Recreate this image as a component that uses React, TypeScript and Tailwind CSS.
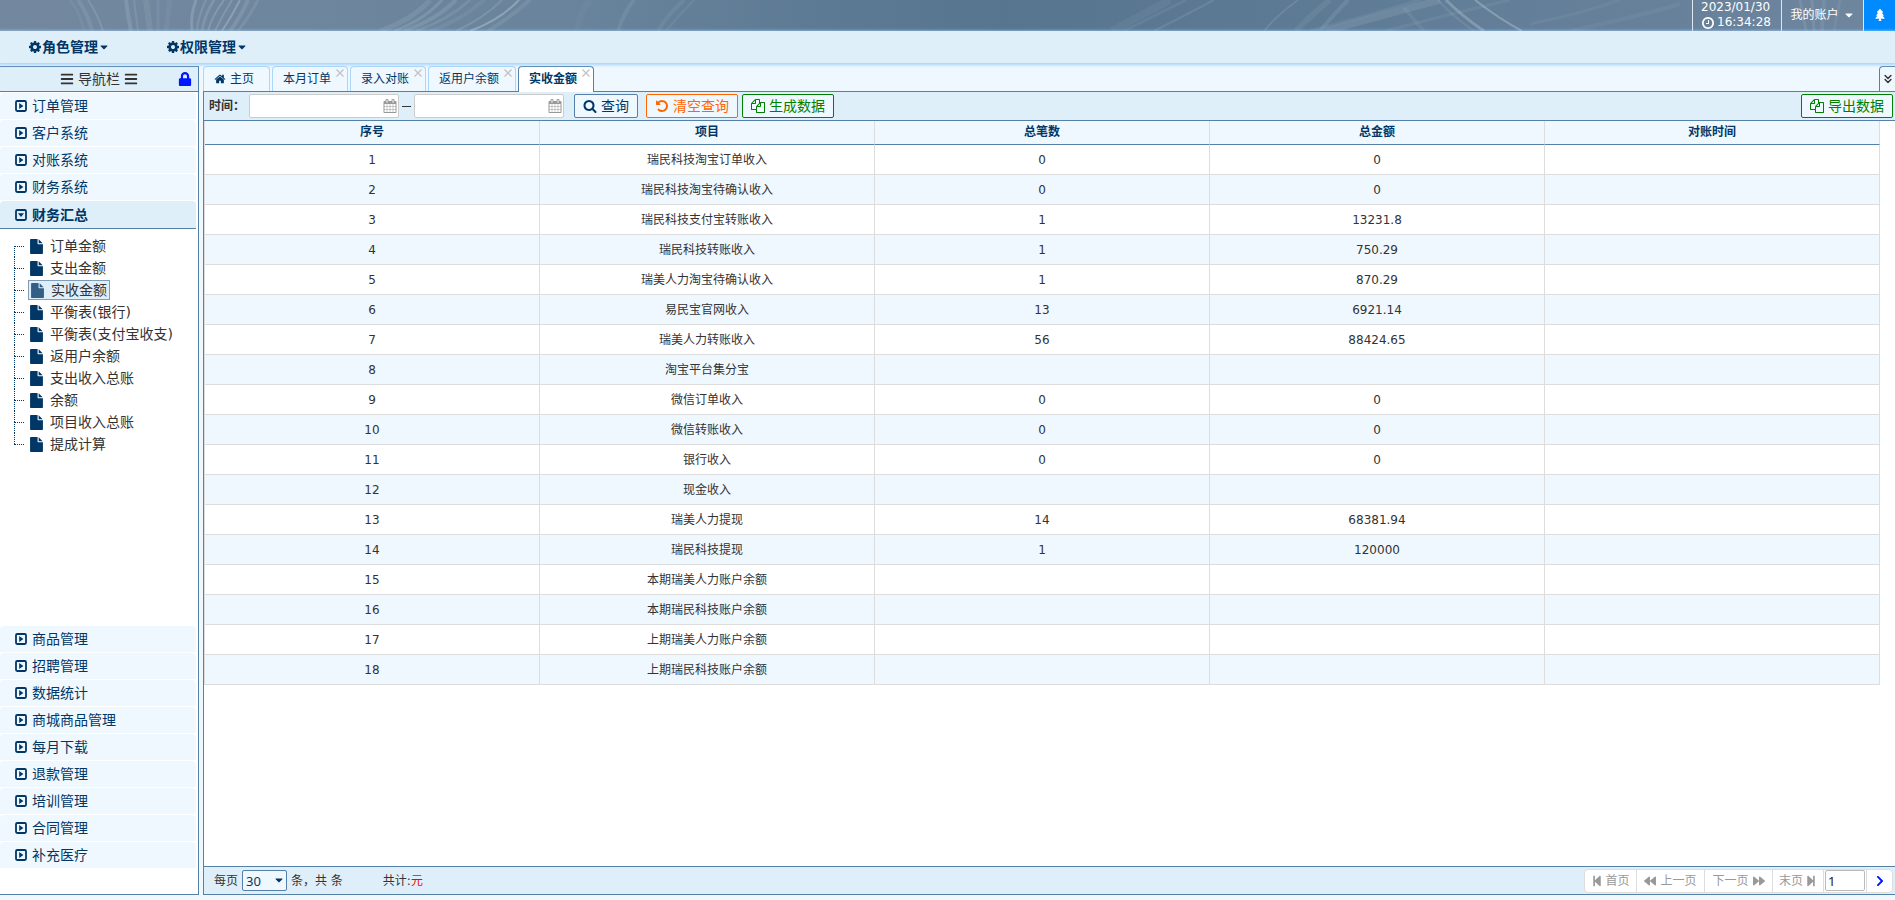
import React from "react";
import { ChevronsDown } from "lucide-react";
import {
  FaBackward,
  FaBars,
  FaCaretDown,
  FaChevronRight,
  FaForward,
  FaLock,
  FaStepBackward,
  FaStepForward,
  FaTree,
} from "react-icons/fa";

const PATHS = {
  copy: "M1696 384q40 0 68 28t28 68v1216q0 40-28 68t-68 28h-960q-40 0-68-28t-28-68v-288h-544q-40 0-68-28t-28-68v-672q0-40 20-88t48-76l408-408q28-28 76-48t88-20h416q40 0 68 28t28 68v328q68-40 128-40h416zm-544 213l-299 299h299v-299zm-640-384l-299 299h299v-299zm196 647l316-316v-416h-384v416q0 40-28 68t-68 28h-416v640h512v-256q0-40 20-88t48-76zm956 804v-1152h-384v416q0 40-28 68t-68 28h-416v640h896z",
  file: "M1152 512v-472q22 14 36 28l408 408q14 14 28 36h-472zm-128 32q0 40 28 68t68 28h544v1056q0 40-28 68t-68 28h-1344q-40 0-68-28t-28-68v-1600q0-40 28-68t68-28h800v544z",
  clock:
    "M1024 544v448q0 14-9 23t-23 9h-320q-14 0-23-9t-9-23v-64q0-14 9-23t23-9h224v-352q0-14 9-23t23-9h64q14 0 23 9t9 23zm416 352q0-148-73-273t-198-198-273-73-273 73-198 198-73 273 73 273 198 198 273 73 273-73 198-198 73-273zm224 0q0 209-103 385.500t-279.500 279.500-385.500 103-385.500-103-279.500-279.500-103-385.500 103-385.500 279.500-279.500 385.500-103 385.500 103 279.500 279.500 103 385.500z",
  calendar:
    "M192 1664h288v-288h-288v288zm352 0h320v-288h-320v288zm-352-352h288v-320h-288v320zm352 0h320v-320h-320v320zm-352-384h288v-288h-288v288zm736 736h320v-288h-320v288zm-384-736h320v-288h-320v288zm768 736h288v-288h-288v288zm-384-352h320v-320h-320v320zm-352-864v-288q0-13-9.500-22.500t-22.500-9.500h-64q-13 0-22.500 9.500t-9.500 22.500v288q0 13 9.500 22.500t22.500 9.500h64q13 0 22.500-9.500t9.500-22.500zm736 864h288v-320h-288v320zm-384-384h320v-288h-320v288zm384 0h288v-288h-288v288zm32-480v-288q0-13-9.500-22.500t-22.500-9.500h-64q-13 0-22.500 9.500t-9.500 22.500v288q0 13 9.500 22.500t22.500 9.500h64q13 0 22.500-9.500t9.500-22.500zm384-64v1280q0 52-38 90t-90 38h-1408q-52 0-90-38t-38-90v-1280q0-52 38-90t90-38h128v-96q0-66 47-113t113-47h64q66 0 113 47t47 113v96h384v-96q0-66 47-113t113-47h64q66 0 113 47t47 113v96h128q52 0 90 38t38 90z",
  undo: "M1664 896q0 156-61 298t-164 245-245 164-298 61q-172 0-327-72.500t-264-204.500q-7-10-6.500-22.500t8.500-20.500l137-138q10-9 25-9 16 2 23 12 73 95 179 147t225 52q104 0 198.500-40.500t163.500-109.500 109.500-163.500 40.500-198.500-40.500-198.500-109.500-163.500-163.500-109.500-198.500-40.500q-98 0-188 35.500t-160 101.500l137 138q31 30 14 69-17 40-59 40h-448q-26 0-45-19t-19-45v-448q0-42 40-59 39-17 69 14l130 129q107-101 244.500-156.500t284.500-55.500q156 0 298 61t245 164 164 245 61 298z",
  search:
    "M1216 832q0-185-131.500-316.500t-316.500-131.500-316.500 131.500-131.500 316.500 131.500 316.500 316.500 131.500 316.500-131.500 131.500-316.500zm512 832q0 52-38 90t-90 38q-54 0-90-38l-343-342q-179 124-399 124-143 0-273.500-55.500t-225-150-150-225-55.500-273.500 55.500-273.500 150-225 225-150 273.500-55.500 273.500 55.500 225 150 150 225 55.500 273.500q0 220-124 399l343 343q37 37 37 90z",
  home: "M1472 992v480q0 26-19 45t-45 19h-384v-384h-256v384h-384q-26 0-45-19t-19-45v-480q0-1 .5-3t.5-3l575-474 575 474q1 2 1 6zm223-69l-62 74q-8 9-21 11h-3q-13 0-21-7l-692-577-692 577q-12 8-24 7-13-2-21-11l-62-74q-8-10-7-23.500t11-21.500l719-599q32-26 76-26t76 26l244 204v-195q0-14 9-23t23-9h192q14 0 23 9t9 23v408l219 182q10 8 11 21.500t-7 23.500z",
  cog: "M1152 896q0-106-75-181t-181-75-181 75-75 181 75 181 181 75 181-75 75-181zm512-109v222q0 12-8 23t-20 13l-185 28q-19 54-39 91 35 50 107 138 10 12 10 25t-9 23q-27 37-99 108t-94 71q-12 0-26-9l-138-108q-44 23-91 38-16 136-29 186-7 28-36 28h-222q-14 0-24.500-8.500t-11.500-21.500l-28-184q-49-16-90-37l-141 107q-10 9-25 9-14 0-25-11-126-114-165-168-7-10-7-23 0-12 8-23 15-21 51-66.500t54-70.500q-27-50-41-99l-183-27q-13-2-21-12.500t-8-23.500v-222q0-12 8-23t19-13l186-28q14-46 39-92-40-57-107-138-10-12-10-24 0-10 9-23 26-36 98.500-107.500t94.500-71.500q13 0 26 10l138 107q44-23 91-38 16-136 29-186 7-28 36-28h222q14 0 24.500 8.500t11.500 21.500l28 184q49 16 90 37l142-107q9-9 24-9 13 0 25 10 129 119 165 170 7 8 7 22 0 12-8 23-15 21-51 66.500t-54 70.500q26 50 41 98l183 28q13 2 21 12.500t8 23.500z",
};

function Glyph({ name, className }: { name: keyof typeof PATHS; className: string }) {
  return (
    <svg viewBox="0 0 1792 1792" fill="currentColor" aria-hidden="true" className={className}>
      <path d={PATHS[name]} />
    </svg>
  );
}

function CaretSquare({ open }: { open?: boolean }) {
  return (
    <svg viewBox="0 0 12 12" aria-hidden="true" className="h-3 w-3 shrink-0">
      <rect x="1" y="1" width="10" height="10" rx="1.2" fill="none" stroke="currentColor" strokeWidth="1.8" />
      <path d={open ? "M3 4.2h6L6 8z" : "M4.2 3v6L8.4 6z"} fill="currentColor" />
    </svg>
  );
}

/* Light brush strokes over the header gradient */
const STROKES: [string, number, number][] = [
  ["M78 0Q88 14 92 31", 4, 0.12],
  ["M88 0Q98 15 103 31", 2, 0.2],
  ["M70 0Q80 12 84 31", 3, 0.08],
  ["M126 0Q128 16 131 31", 4, 0.2],
  ["M134 0Q136 16 138 31", 2, 0.16],
  ["M146 0L150 31", 6, 0.12],
  ["M158 0L158 31", 3, 0.1],
  ["M170 0L166 31", 5, 0.08],
  ["M196 0Q190 16 192 31", 3, 0.26],
  ["M206 0Q198 16 197 31", 2, 0.2],
  ["M214 0Q204 16 202 31", 3, 0.2],
  ["M224 0Q212 16 208 31", 2, 0.26],
  ["M232 0Q222 16 215 31", 2, 0.24],
  ["M240 0Q232 16 222 31", 2, 0.36],
  ["M248 0Q240 18 230 31", 4, 0.18],
  ["M258 0Q250 16 238 31", 3, 0.14],
  ["M430 0Q412 20 380 31", 5, 0.14],
  ["M442 0Q424 20 394 31", 3, 0.2],
  ["M456 0Q436 20 404 31", 4, 0.18],
  ["M470 0Q448 20 416 31", 3, 0.16],
  ["M484 0Q462 20 430 31", 4, 0.1],
  ["M502 0Q484 18 456 31", 2, 0.2],
  ["M519 0Q500 20 470 31", 2, 0.42],
  ["M530 0Q512 16 488 31", 4, 0.14],
  ["M590 0Q580 12 576 31", 6, 0.05],
  ["M634 0Q624 12 618 31", 4, 0.12],
  ["M684 0Q668 14 658 31", 4, 0.1],
  ["M694 0Q680 14 666 31", 2, 0.1],
  ["M1170 0Q1140 16 1112 31", 8, 0.08],
  ["M1186 0Q1150 18 1124 31", 3, 0.1],
  ["M1214 0Q1180 18 1154 31", 2, 0.14],
  ["M1298 0Q1276 16 1264 31", 2, 0.16],
  ["M1330 0Q1312 14 1296 31", 6, 0.1],
  ["M1348 0Q1334 14 1320 31", 4, 0.14],
  ["M1440 0Q1380 16 1326 31", 7, 0.16],
  ["M1420 0Q1366 16 1310 31", 3, 0.1],
  ["M1510 0Q1450 14 1386 31", 3, 0.1],
  ["M1404 8L1424 31", 4, 0.1],
  ["M1446 0Q1462 16 1484 31", 3, 0.34],
  ["M1438 0Q1452 16 1474 31", 2, 0.14],
  ["M1475 0Q1498 18 1522 31", 2, 0.4],
  ["M1620 0Q1580 14 1530 24", 3, 0.08],
  ["M1680 4Q1640 16 1570 31", 4, 0.08],
  ["M1800 0L1806 31", 3, 0.14],
  ["M1812 0L1814 31", 3, 0.16],
  ["M1824 0L1822 31", 4, 0.12],
  ["M1840 0L1834 31", 3, 0.1],
];

function Banner() {
  return (
    <svg viewBox="0 0 1895 31" preserveAspectRatio="none" aria-hidden="true" className="absolute inset-0 h-full w-full">
      <defs>
        <linearGradient id="banner" x1="0" x2="1" y1="0" y2="0">
          <stop offset="0" stopColor="#73889f" />
          <stop offset="0.3" stopColor="#69849c" />
          <stop offset="0.42" stopColor="#5e7b95" />
          <stop offset="0.53" stopColor="#57758f" />
          <stop offset="0.7" stopColor="#5e7b96" />
          <stop offset="0.85" stopColor="#66809a" />
          <stop offset="1" stopColor="#6f869e" />
        </linearGradient>
        <filter id="soft" x="0" y="0" width="1895" height="31" filterUnits="userSpaceOnUse">
          <feGaussianBlur stdDeviation="0.7" />
        </filter>
      </defs>
      <rect width="1895" height="31" fill="url(#banner)" />
      <g filter="url(#soft)" opacity="0.85">
        {STROKES.map(([d, width, opacity]) => (
          <path key={d} d={d} fill="none" stroke="#cfdbe2" strokeWidth={width} strokeOpacity={opacity} />
        ))}
      </g>
    </svg>
  );
}

const MENU_TOP = ["订单管理", "客户系统", "对账系统", "财务系统"];
const MENU_BOTTOM = [
  "商品管理",
  "招聘管理",
  "数据统计",
  "商城商品管理",
  "每月下载",
  "退款管理",
  "培训管理",
  "合同管理",
  "补充医疗",
];
const TREE = [
  "订单金额",
  "支出金额",
  "实收金额",
  "平衡表(银行)",
  "平衡表(支付宝收支)",
  "返用户余额",
  "支出收入总账",
  "余额",
  "项目收入总账",
  "提成计算",
];
const TABS = ["本月订单", "录入对账", "返用户余额", "实收金额"];
const COLUMNS = ["序号", "项目", "总笔数", "总金额", "对账时间"];
const ROWS: [string, string, string][] = [
  ["瑞民科技淘宝订单收入", "0", "0"],
  ["瑞民科技淘宝待确认收入", "0", "0"],
  ["瑞民科技支付宝转账收入", "1", "13231.8"],
  ["瑞民科技转账收入", "1", "750.29"],
  ["瑞美人力淘宝待确认收入", "1", "870.29"],
  ["易民宝官网收入", "13", "6921.14"],
  ["瑞美人力转账收入", "56", "88424.65"],
  ["淘宝平台集分宝", "", ""],
  ["微信订单收入", "0", "0"],
  ["微信转账收入", "0", "0"],
  ["银行收入", "0", "0"],
  ["现金收入", "", ""],
  ["瑞美人力提现", "14", "68381.94"],
  ["瑞民科技提现", "1", "120000"],
  ["本期瑞美人力账户余额", "", ""],
  ["本期瑞民科技账户余额", "", ""],
  ["上期瑞美人力账户余额", "", ""],
  ["上期瑞民科技账户余额", "", ""],
];

function MenuItem({ label }: { label: string }) {
  return (
    <button
      type="button"
      className="mb-px mr-0.5 flex h-[26px] shrink-0 items-center gap-[5px] rounded-t bg-[#f0f8ff] pl-[15px] text-sm leading-5 text-[#003766]"
    >
      <CaretSquare />
      {label}
    </button>
  );
}

function DateField({ label }: { label: string }) {
  return (
    <div className="relative">
      <input
        aria-label={label}
        className="block h-6 w-[150px] rounded-xs border border-[#ccc] bg-white pl-2 pr-6 text-xs outline-none"
      />
      <Glyph name="calendar" className="pointer-events-none absolute right-[2px] top-[5px] h-3.5 w-3.5 text-[#999]" />
    </div>
  );
}

export default function App() {
  return (
    <div className="flex min-h-screen flex-col bg-[#f0f8ff] font-['DejaVu_Sans','Noto_Sans_CJK_SC',sans-serif] text-xs text-[#333]">
      <header className="relative flex h-[31px] justify-end overflow-hidden text-white">
        <Banner />
        <div className="relative flex w-[89px] flex-col justify-end border-l border-[#dfe6ec] pb-px pl-2 leading-[15px]">
          <span>2023/01/30</span>
          <span className="flex items-center gap-0.5">
            <Glyph name="clock" className="h-3.5 w-3.5 shrink-0" />
            16:34:28
          </span>
        </div>
        <button type="button" className="relative flex w-[83px] items-center justify-center gap-1 border-x border-[#dfe6ec] pb-0.5">
          我的账户
          <FaCaretDown className="h-3 w-3" />
        </button>
        <button type="button" aria-label="通知" className="relative flex w-[31px] items-center justify-center bg-[#008aff] pb-0.5">
          <FaTree className="h-3 w-3" />
        </button>
      </header>

      <nav className="relative z-10 flex h-8 items-center gap-14 bg-[#dfeffa] pl-7 text-sm leading-5 text-[#003766] shadow-[0_1px_3px_1px_#a4d3fd]">
        {["角色管理", "权限管理"].map((label) => (
          <button key={label} type="button" className="flex items-center font-bold">
            <Glyph name="cog" className="h-3.5 w-3.5" />
            {label}
            <FaCaretDown className="h-3 w-3" />
          </button>
        ))}
      </nav>

      <div className="mb-[5px] mt-[3px] flex flex-1 gap-1">
        <aside className="flex w-[199px] shrink-0 flex-col border-y border-r border-[#5581a9] bg-white">
          <div className="mb-px flex h-[25px] shrink-0 items-center border-b border-[#5581a9] bg-[#dfeffa] pr-1.5 text-sm leading-5">
            <span className="flex flex-1 items-center justify-center gap-1 pl-5">
              <FaBars className="h-3.5 w-3.5" />
              导航栏
              <FaBars className="h-3.5 w-3.5" />
            </span>
            <button type="button" aria-label="锁定">
              <FaLock className="h-3.5 w-3.5 text-[#0016ff]" />
            </button>
          </div>
          {MENU_TOP.map((label) => (
            <MenuItem key={label} label={label} />
          ))}
          <button
            type="button"
            className="mr-0.5 flex h-7 shrink-0 items-center gap-[5px] rounded-t border-b border-[#5581a9] bg-[#dfeffa] pl-[15px] text-sm leading-5 font-bold text-[#003766]"
          >
            <CaretSquare open />
            财务汇总
          </button>
          <ul className="flex-1 pl-3.5 pt-1.5 text-sm leading-5">
            {TREE.map((label, i) => (
              <li key={label} className="flex h-[22px]">
                <span className="flex w-3.5 flex-col pr-1">
                  <span className={i === 0 ? "flex-1" : "flex-1 border-l border-dotted border-[#003766]"} />
                  <span
                    className={
                      i === TREE.length - 1
                        ? "flex-1 border-t border-dotted border-[#003766]"
                        : "flex-1 border-l border-t border-dotted border-[#003766]"
                    }
                  />
                </span>
                <a
                  href="#"
                  className={
                    i === 2
                      ? "flex h-5 items-center gap-1.5 self-center border border-[#7f9db9] bg-[#dfeffa] pl-px pr-0.5 text-[#333]"
                      : "flex h-5 items-center gap-1.5 self-center border border-transparent text-[#333]"
                  }
                >
                  <Glyph name="file" className={i === 2 ? "h-[15px] w-[15px] text-[#335f85]" : "h-[15px] w-[15px] text-[#003766]"} />
                  {label}
                </a>
              </li>
            ))}
          </ul>
          <div className="flex flex-col pb-[25px]">
            {MENU_BOTTOM.map((label) => (
              <MenuItem key={label} label={label} />
            ))}
          </div>
        </aside>

        <main className="flex min-w-0 flex-1 flex-col">
          <div className="flex h-[26px] shrink-0 text-[#003766]">
            <div className="flex flex-1 gap-0.5 border-b border-[#5581a9]">
              <button type="button" className="flex w-[67px] items-center gap-1 rounded-t border border-b-0 border-[#a9d6fb] pl-2.5">
                <Glyph name="home" className="h-3 w-3" />
                主页
              </button>
              {TABS.map((label, i) => (
                <div
                  key={label}
                  className={
                    i === TABS.length - 1
                      ? "-mb-px flex rounded-t border border-b-0 border-[#5581a9] bg-white pb-px font-bold"
                      : "flex rounded-t border border-b-0 border-[#a9d6fb]"
                  }
                >
                  <button type="button" className="pl-2.5 pr-[5px]">
                    {label}
                  </button>
                  <button type="button" aria-label={"关闭" + label} className="flex w-[11px] pt-0.5 text-[#c2c2c2]">
                    <svg viewBox="0 0 8 8" aria-hidden="true" className="h-2 w-2">
                      <path d="M.5.5l7 7M7.500.5l-7 7" stroke="currentColor" strokeWidth="1.300" />
                    </svg>
                  </button>
                </div>
              ))}
            </div>
            <button
              type="button"
              aria-label="更多标签"
              className="flex w-4 items-center justify-center rounded-tl border-b border-l border-t border-[#5581a9] text-[#333]"
            >
              <ChevronsDown className="h-3.5 w-3.5" strokeWidth={2.5} />
            </button>
          </div>

          <div className="flex flex-1 flex-col border-b border-l border-[#5581a9] bg-white">
            <div className="flex h-[29px] shrink-0 items-center border-b border-[#5581a9] bg-[#dfeffa] pl-[5px] pr-0.5">
              <span className="w-10 font-bold">时间：</span>
              <DateField label="开始时间" />
              <span className="mx-[3px] h-px w-[9px] bg-[#333]" />
              <DateField label="结束时间" />
              <div className="ml-2.5 flex flex-1 text-sm leading-5">
                <button type="button" className="mr-2 flex h-6 items-center gap-1 rounded-xs border border-[#5581a9] bg-[#f0f8ff] px-2 text-[#003766]">
                  <Glyph name="search" className="h-3.5 w-3.5" />
                  查询
                </button>
                <button type="button" className="mr-1 flex h-6 items-center gap-1 rounded-xs border border-[#ff6600] bg-[#f0f8ff] px-2 text-[#ff6600]">
                  <Glyph name="undo" className="h-3.5 w-3.5" />
                  清空查询
                </button>
                <button type="button" className="flex h-6 items-center gap-1 rounded-xs border border-[#008000] bg-[#f0f8ff] px-2 text-[#008000]">
                  <Glyph name="copy" className="h-3.5 w-3.5" />
                  生成数据
                </button>
                <button type="button" className="ml-auto flex h-6 items-center gap-1 rounded-xs border border-[#008000] bg-[#f0f8ff] px-2 text-[#008000]">
                  <Glyph name="copy" className="h-3.5 w-3.5" />
                  导出数据
                </button>
              </div>
            </div>

            <div className="flex-1 pr-[15px]">
              <table className="w-full table-fixed border-separate border-spacing-0 border-l border-[#ddd] text-center">
                <thead>
                  <tr className="h-6 bg-[#f0f8ff] text-[#003766]">
                    {COLUMNS.map((column) => (
                      <th key={column} scope="col" className="border-b border-r border-b-[#5581a9] border-r-[#ddd] p-0 pb-0.5 leading-[18px] font-bold">
                        {column}
                      </th>
                    ))}
                  </tr>
                </thead>
                <tbody>
                  {ROWS.map((row, i) => (
                    <tr key={row[0]} className="h-[30px] even:bg-[#f0f8ff]">
                      {[String(i + 1), ...row, ""].map((cell, c) => (
                        <td key={c} className="border-b border-r border-[#ddd] p-0 leading-4">
                          {cell}
                        </td>
                      ))}
                    </tr>
                  ))}
                </tbody>
              </table>
            </div>

            <footer className="flex h-7 shrink-0 items-center border-t border-[#5581a9] bg-[#dfeffa] pl-2.5 pr-0.5">
              <label htmlFor="page-size">每页</label>
              <div className="relative mx-1">
                <select
                  id="page-size"
                  defaultValue="30"
                  className="block h-[21px] w-[45px] appearance-none rounded-xs border border-[#5581a9] bg-[#f0f8ff] pl-[3px] font-['Noto_Sans',sans-serif] text-[13px] leading-4 text-[#003766] outline-none"
                >
                  <option>30</option>
                  <option>50</option>
                </select>
                <FaCaretDown className="pointer-events-none absolute right-0.5 top-1 h-3 w-3 text-[#003766]" />
              </div>
              <span>条，共 条</span>
              <span className="ml-10">
                共计:<span className="text-[#ff0000]">元</span>
              </span>
              <div className="ml-auto flex h-6 items-center rounded border border-[#ddd] bg-white text-[#999]">
                <button type="button" className="flex h-full w-[51px] items-center justify-center gap-0.5">
                  <FaStepBackward className="h-3 w-3" />
                  首页
                </button>
                <button type="button" className="flex h-full w-[68px] items-center justify-center gap-1 border-l border-[#ddd]">
                  <FaBackward className="h-3 w-3" />
                  上一页
                </button>
                <button type="button" className="flex h-full w-[68px] items-center justify-center gap-1 border-l border-[#ddd]">
                  下一页
                  <FaForward className="h-3 w-3" />
                </button>
                <button type="button" className="flex h-full w-[51px] items-center justify-center gap-0.5 border-l border-[#ddd]">
                  末页
                  <FaStepForward className="h-3 w-3" />
                </button>
                <span className="flex h-full items-center border-x border-[#ddd] px-px">
                  <input
                    aria-label="页码"
                    defaultValue="1"
                    className="h-[21px] w-10 rounded-xs border border-[#bbb] bg-white px-0.5 font-['Noto_Sans',sans-serif] text-[13px] text-[#222] outline-none"
                  />
                </span>
                <button type="button" aria-label="跳转" className="flex h-full w-[25px] items-center justify-center text-[#0016ff]">
                  <FaChevronRight className="h-3 w-3" />
                </button>
              </div>
            </footer>
          </div>
        </main>
      </div>
    </div>
  );
}
